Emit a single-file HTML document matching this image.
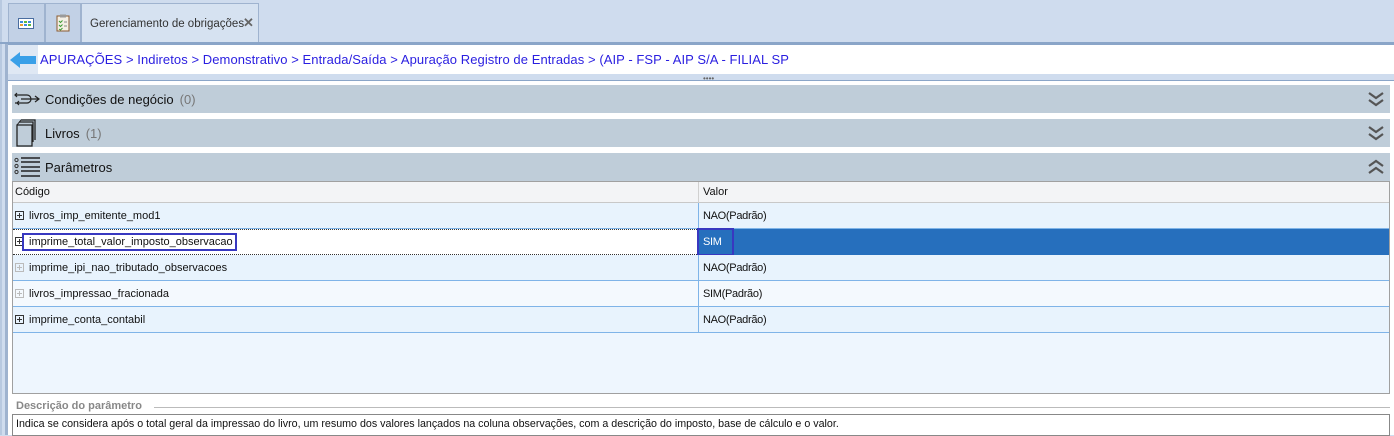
<!DOCTYPE html>
<html><head><meta charset="utf-8"><style>
*{margin:0;padding:0;box-sizing:border-box}
body{width:1394px;height:435px;overflow:hidden;background:#cfdcee;font-family:"Liberation Sans",sans-serif;position:relative}
.a{position:absolute}
.tab{position:absolute;top:3px;height:39px;background:#c2d1e6;border:1px solid #9fb3cf;border-bottom:none}
.hdr{position:absolute;left:12px;width:1378px;height:28px;background:#bfcdd9;font-size:13px;color:#111}
.hdr span.t{position:absolute;left:33px;top:7px}
.hdr span.c{color:#777;margin-left:6px}
.chev{position:absolute;right:6px;top:6px}
.row{position:absolute;left:13px;width:1376px;height:26px;background:#e8f3fd;border-bottom:1px solid #7fb4e8;font-size:11px;color:#111}
.row .k{position:absolute;left:16px;top:7px}
.row .v{position:absolute;left:690px;top:7px;font-size:11px;letter-spacing:-0.3px}
.row .sep{position:absolute;left:685px;top:0;width:1px;height:26px;background:#7fb4e8}
.pl{position:absolute;left:2px;top:8px;width:9px;height:9px;border:1px solid #333;font-size:0}
.pl:before{content:"";position:absolute;left:1px;top:3px;width:5px;height:1px;background:#333}
.pl:after{content:"";position:absolute;left:3px;top:1px;width:1px;height:5px;background:#333}
.pl.g{border-color:#bbb}.pl.g:before,.pl.g:after{background:#bbb}
</style></head><body>
<div class="a" style="left:0;top:0;width:2px;height:435px;background:#b8c9e0"></div>
<div class="tab" style="left:8px;width:37px"><svg class="a" style="left:9px;top:14px" width="16" height="11"><rect x="0.5" y="0.5" width="15" height="10" fill="#fff" stroke="#4a6da0"/><rect x="2" y="3" width="3" height="2" fill="#3b8be0"/><rect x="6" y="3" width="3" height="2" fill="#5cba3c"/><rect x="10" y="3" width="3" height="2" fill="#3b8be0"/><rect x="2" y="6" width="3" height="2" fill="#e8a030"/><rect x="6" y="6" width="3" height="2" fill="#3b8be0"/><rect x="10" y="6" width="3" height="2" fill="#5cba3c"/></svg></div>
<div class="tab" style="left:45px;width:36px"><svg class="a" style="left:10px;top:10px" width="14" height="18"><rect x="1" y="2" width="12" height="15" fill="#f4efe4" stroke="#8a5a30"/><rect x="4" y="0.5" width="6" height="3" fill="#9a9a9a"/><path d="M3 7l1.5 1.5 2-2M3 11l1.5 1.5 2-2M3 15l1.5 1 2-2" stroke="#3a9a30" fill="none"/><path d="M8 8h3M8 12h3" stroke="#888"/></svg></div>
<div class="tab" style="left:81px;width:178px;background:#d6e2f1;height:40px"><span class="a" style="left:8px;top:14px;font-size:11.5px;color:#333">Gerenciamento de obrigações</span><span class="a" style="left:161px;top:11px;font-size:13px;color:#666;font-weight:bold">✕</span></div>
<div class="a" style="left:0;top:42px;width:1394px;height:2px;background:#8aa5c8"></div>
<div class="a" style="left:5px;top:44px;width:3px;height:391px;background:#9fb3cf"></div>
<div class="a" style="left:8px;top:44px;width:1386px;height:391px;background:#fff"></div>
<div class="a" style="left:8px;top:44px;width:1386px;height:1px;background:#8aa5c8"></div>
<div class="a" style="left:8px;top:45px;width:30px;height:29px;background:#dfe8f4"></div>
<svg class="a" style="left:10px;top:51px" width="26" height="18"><path d="M0 9L10 1V5H26V13H10V17Z" fill="#3aa0e8"/></svg>
<div class="a" style="left:40px;top:52px;font-size:13px;letter-spacing:0.07px;color:#2a1ee0">APURAÇÕES &gt; Indiretos &gt; Demonstrativo &gt; Entrada/Saída &gt; Apuração Registro de Entradas &gt; (AIP - FSP - AIP S/A - FILIAL SP</div>
<div class="a" style="left:8px;top:74px;width:1386px;height:6px;background:#cfdcee"></div>
<div class="a" style="left:8px;top:80px;width:1386px;height:1px;background:#8aa5c8"></div>
<div class="a" style="left:703px;top:74px;font-size:8px;color:#666;letter-spacing:0">••••</div>
<div class="a" style="left:8px;top:81px;width:1386px;height:354px;background:#fff"></div>

<div class="hdr" style="top:85px"><svg class="a" style="left:1px;top:5px" width="28" height="18"><path d="M2 5h12a4 4 0 0 1 0 8H2M8 9h18M22 6l4 3-4 3M4 3l-2 2 2 2M6 11l-2 2 2 2" stroke="#222" fill="none" stroke-width="1.2"/></svg><span class="t">Condições de negócio<span class="c">(0)</span></span><svg class="chev" width="16" height="16"><path d="M1 2l7 5 7-5M1 9l7 5 7-5" stroke="#555" stroke-width="2.2" fill="none"/></svg></div>
<div class="hdr" style="top:119px"><svg class="a" style="left:3px;top:0" width="24" height="28"><path d="M6 1h14v20M4 3h14v20M2 6h15v21H2z" stroke="#222" fill="#bfcdd9" stroke-width="1.3"/><path d="M2 6l4-5" stroke="#222"/></svg><span class="t">Livros<span class="c">(1)</span></span><svg class="chev" width="16" height="16"><path d="M1 2l7 5 7-5M1 9l7 5 7-5" stroke="#555" stroke-width="2.2" fill="none"/></svg></div>
<div class="hdr" style="top:153px"><svg class="a" style="left:2px;top:4px" width="28" height="20"><circle cx="2.5" cy="3" r="1.6" fill="none" stroke="#333"/><circle cx="2.5" cy="9" r="1.6" fill="none" stroke="#333"/><circle cx="2.5" cy="15" r="1.6" fill="none" stroke="#333"/><path d="M7 1h19M7 5h19M7 10h19M7 14h19M7 19h19" stroke="#222" stroke-width="1.6"/></svg><span class="t">Parâmetros</span><svg class="chev" width="16" height="16"><path d="M1 7l7-5 7 5M1 14l7-5 7 5" stroke="#555" stroke-width="2.2" fill="none"/></svg></div>

<div class="a" style="left:12px;top:181px;width:1378px;height:213px;border:1px solid #a0a0a0;background:#eef6fe"></div>
<div class="a" style="left:13px;top:182px;width:1376px;height:21px;background:#f3f4f6;border-bottom:1px solid #c8c8c8;font-size:11px;color:#111"><span class="a" style="left:2px;top:4px">Código</span><span class="a" style="left:685px;top:0;width:1px;height:21px;background:#d0d0d0"></span><span class="a" style="left:690px;top:4px">Valor</span></div>

<div class="row" style="top:203px"><div class="pl"></div><span class="k">livros_imp_emitente_mod1</span><div class="sep"></div><span class="v">NAO(Padrão)</span></div>
<div class="row" style="top:229px;background:#fff;border-top:1px dotted #333;border-bottom:1px dotted #333"><div class="pl" style="top:7px"></div><div class="a" style="left:9px;top:3px;width:215px;height:18px;border:2px solid #3838c0"></div><span class="k" style="top:6px">imprime_total_valor_imposto_observacao</span><div class="a" style="left:685px;top:-1px;width:691px;height:26px;background:#266fbd"></div><div class="a" style="left:684px;top:-2px;width:37px;height:28px;border:2px solid #3838c0"></div><span class="v" style="color:#fff;top:6px">SIM</span></div>
<div class="row" style="top:255px"><div class="pl g"></div><span class="k">imprime_ipi_nao_tributado_observacoes</span><div class="sep"></div><span class="v">NAO(Padrão)</span></div>
<div class="row" style="top:281px;background:#f4f9fe"><div class="pl g"></div><span class="k">livros_impressao_fracionada</span><div class="sep"></div><span class="v">SIM(Padrão)</span></div>
<div class="row" style="top:307px"><div class="pl"></div><span class="k">imprime_conta_contabil</span><div class="sep"></div><span class="v">NAO(Padrão)</span></div>

<div class="a" style="left:16px;top:400px;font-size:11px;font-weight:bold;color:#888">Descrição do parâmetro</div>
<div class="a" style="left:154px;top:407px;width:1236px;height:1px;background:#bbb"></div>
<div class="a" style="left:12px;top:414px;width:1378px;height:22px;border:1px solid #888;background:#fff;font-size:10.7px;color:#111;padding:3px 0 0 3px">Indica se considera após o total geral da impressao do livro, um resumo dos valores lançados na coluna observações, com a descrição do imposto, base de cálculo e o valor.</div>
</body></html>
